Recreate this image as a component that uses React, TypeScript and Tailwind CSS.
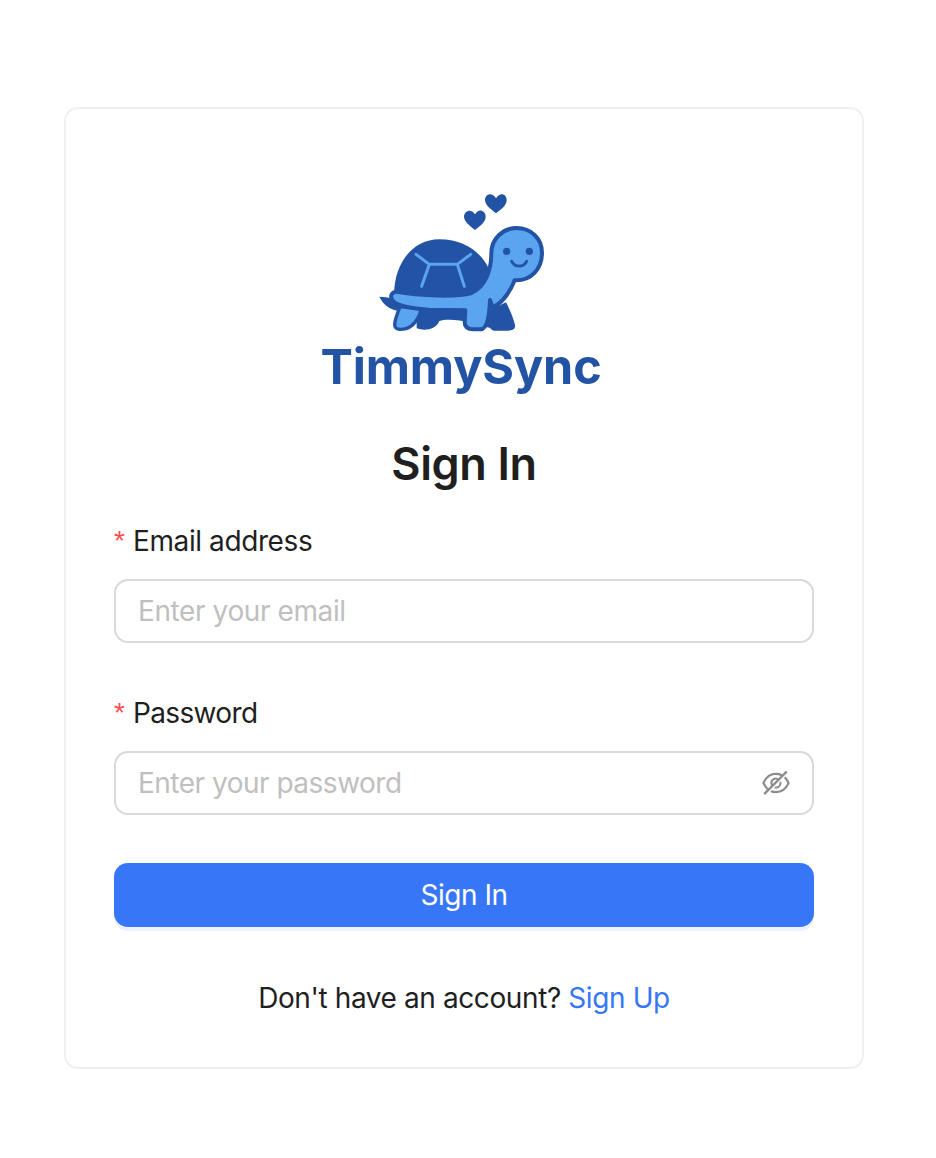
import { AiOutlineEyeInvisible } from "react-icons/ai";

const DARK = "#2353a5";
const LIGHT = "#5ba4f0";

function Turtle() {
  return (
    <svg width="180" height="150" viewBox="0 0 540 450" className="block">
      <path d="M315 135 C300 122 282 110 282 95 C282 78 303 68 315 88 C325 68 347 76 347 95 C347 112 330 122 315 135Z" fill={DARK} />
      <path d="M378 85 C362 72 345 60 345 45 C345 26 367 20 378 40 C390 20 410 26 410 45 C410 62 394 72 378 85Z" fill={DARK} />
      <path d="M28 335 C45 335 60 340 75 340 L95 378 C70 378 42 365 28 335Z" fill={DARK} />
      <path d="M140 360 L295 360 L295 412 C270 404 225 402 208 408 C200 432 165 440 140 430Z" fill={DARK} />
      <path d="M340 385 L408 352 C420 375 432 405 435 420 C437 434 425 437 410 437 L372 437 C362 437 362 420 340 430Z" fill={DARK} />
      <path d="M72 325 C75 230 130 163 208 163 C285 163 335 205 356 250 L340 330 L72 335Z" fill={DARK} />
      <path d="M90 365 L155 372 C146 402 130 424 108 431 C92 435 75 435 74 420 C74 405 82 385 90 365Z" fill={LIGHT} stroke={DARK} strokeWidth="10" strokeLinejoin="round" />
      <path d="M78 320 C65 322 60 332 66 344 C74 360 120 370 175 374 L286 376 L284 412 C284 426 292 433 310 433 L335 433 C350 428 358 395 360 345 L368 368 C395 354 418 326 434 286 C485 288 516 250 516 203 C516 160 482 129 440 129 C398 129 364 162 364 205 C364 245 352 304 302 325 C270 335 150 335 78 320Z" fill={LIGHT} stroke={DARK} strokeWidth="12" strokeLinejoin="round" />
      <circle cx="410" cy="199" r="11" fill={DARK} />
      <circle cx="478" cy="199" r="11" fill={DARK} />
      <path d="M425 229 C435 248 460 248 470 229" fill="none" stroke={DARK} strokeWidth="9" strokeLinecap="round" />
      <path d="M138 208 L178 238 L262 238 L302 208 M178 238 L155 304 M262 238 L283 304" fill="none" stroke={LIGHT} strokeWidth="9" strokeLinecap="round" strokeLinejoin="round" />
    </svg>
  );
}

export default function App() {
  const labelClass = "flex items-center h-[28px] text-[28px] leading-[28px] text-[#1f1f1f]";
  const star = <span className="text-[#ff4d4f] w-[19px] text-[28px] font-['Liberation_Sans',sans-serif]">*</span>;
  return (
    <div className="min-h-[1158px] bg-white pt-[107px] pl-[64px] font-['Inter',sans-serif]">
      <div className="w-[800px] h-[962px] border-2 border-[#f0f0f0] rounded-[14px] px-[48px] pt-[76px]">
        <div className="flex flex-col items-center">
          <div className="ml-[-8px]">
            <Turtle />
          </div>
          <div className="text-[48.5px] leading-[56px] mt-[4px] font-bold tracking-[-0.1px] text-[#2353a5] ml-[-6px]">
            TimmySync
          </div>
        </div>
        <h1 className="text-center text-[45px] leading-[56px] font-semibold tracking-[-0.4px] text-[#1f1f1f] mt-[41px]">Sign In</h1>
        <div className="mt-[35px]">
          <label className={`${labelClass} tracking-[-0.4px]`}>{star}Email address</label>
          <input
            placeholder="Enter your email"
            className="mt-[24px] block w-full h-[64px] px-[22px] border-2 border-[#d9d9d9] rounded-[14px] text-[28px] tracking-[-0.4px] outline-none placeholder:text-[#bfbfbf]"
          />
        </div>
        <div className="mt-[56px]">
          <label className={`${labelClass} tracking-[-0.65px]`}>{star}Password</label>
          <div className="mt-[24px] flex items-center w-full h-[64px] px-[22px] border-2 border-[#d9d9d9] rounded-[14px]">
            <input
              placeholder="Enter your password"
              className="flex-1 min-w-0 text-[28px] tracking-[-0.5px] outline-none placeholder:text-[#bfbfbf]"
            />
            <AiOutlineEyeInvisible className="text-[32px] mr-[-2px] text-[#8c8c8c]" />
          </div>
        </div>
        <button className="mt-[48px] block w-full h-[64px] rounded-[14px] bg-[#3876f8] text-white text-[28px] tracking-[-0.5px] shadow-[0_4px_0_0_#ebf3ff]">
          Sign In
        </button>
        <p className="mt-[53px] text-center text-[28px] leading-[36px] tracking-[-0.4px] text-[#1f1f1f]">
          Don't have an account? <span className="text-[#3876f8]">Sign Up</span>
        </p>
      </div>
    </div>
  );
}
